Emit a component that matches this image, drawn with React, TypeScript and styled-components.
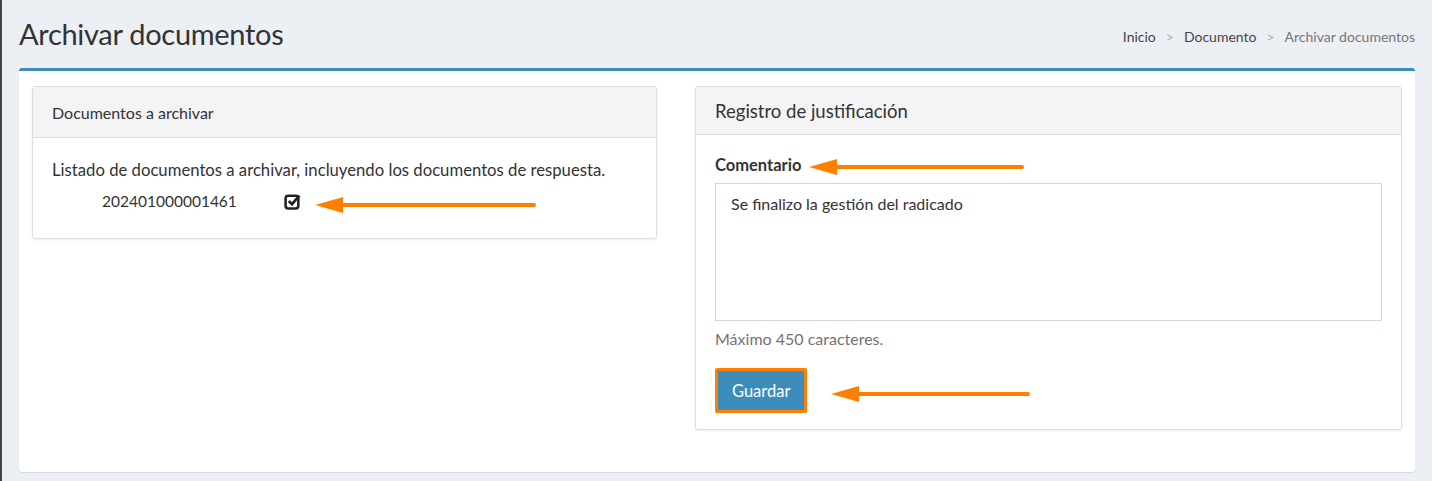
import React from "react";
import styled, { createGlobalStyle } from "styled-components";

const G = createGlobalStyle`
  body { margin:0; background:#ecf0f5; font-family: Lato, "Open Sans", sans-serif; color:#333; }
`;
const Page = styled.div`height:481px; border-left:2px solid #444; box-sizing:border-box; padding:0 17px 0 17px; position:relative;`;
const Head = styled.div`display:flex; justify-content:space-between; align-items:center; height:68px;`;
const Title = styled.h1`margin:0; font-weight:400; font-size:29px; color:#333; letter-spacing:-0.3px; padding-bottom:2px;`;
const Crumbs = styled.div`font-size:14px; color:#444; display:flex; gap:10px; margin-top:4px;`;
const Sep = styled.span`color:#aaa;`;
const Box = styled.div`background:#fff; border-top:3px solid #3c8dbc; border-radius:3px; height:404px; box-sizing:border-box; padding:15px 13px; display:grid; grid-template-columns:625px 707px; gap:38px; align-items:start; box-shadow:0 1px 1px rgba(0,0,0,.1);`;
const Panel = styled.div`border:1px solid #ddd; border-radius:3px; box-shadow:0 1px 2px rgba(0,0,0,.08); position:relative;`;
const PHead = styled.div<{h:number; fs:number}>`height:${p=>p.h}px; background:#f4f4f4; border-bottom:1px solid #ddd; display:flex; align-items:center; padding:0 19px; font-size:${p=>p.fs}px;`;
const PBody = styled.div<{pt:number; pb:number}>`padding:${p=>p.pt}px 19px ${p=>p.pb}px; font-size:16.7px;`;
const Row = styled.div`display:flex; align-items:center; margin-top:10px; padding-left:50px; height:22px;`;
const Num = styled.span`width:182px; font-size:15.5px;`;
const Label = styled.div`font-weight:700; font-size:16.5px;`;
const Area = styled.div`margin-top:8px; height:138px; box-sizing:border-box; border:1px solid #d2d6de; padding:10px 15px; font-size:16px;`;
const Help = styled.div`color:#737373; margin-top:8px; font-size:16px;`;
const Btn = styled.button`display:block; margin-top:20px; background:#3c8dbc; color:#fff; border:3px solid #ff8000; border-radius:2px; font-family:inherit; font-size:16.5px; height:45px; padding:0 14px;`;
const Arrow = styled.svg`position:absolute;`;

const Arr = ({x,y,w}:{x:number,y:number,w:number}) => (
  <Arrow style={{left:x,top:y-10}} width={w} height={20}>
    <line x1={22} y1={10} x2={w-3} y2={10} stroke="#ff8000" strokeWidth={4} strokeLinecap="round"/>
    <polygon points={`0,10 28,2 28,18`} fill="#ff8000"/>
  </Arrow>
);

export default function App(){
  return <Page><G/>
    <Head><Title>Archivar documentos</Title>
      <Crumbs><span>Inicio</span><Sep>&gt;</Sep><span>Documento</span><Sep>&gt;</Sep><span style={{color:"#777"}}>Archivar documentos</span></Crumbs>
    </Head>
    <Box>
      <Panel>
        <PHead h={50} fs={16}>Documentos a archivar</PHead>
        <PBody pt={22} pb={26}>Listado de documentos a archivar, incluyendo los documentos de respuesta.
          <Row><Num>202401000001461</Num>
            <svg width="17" height="17" viewBox="0 0 16 16"><rect x="1.5" y="2.5" width="12" height="12" rx="2.5" fill="none" stroke="#222" strokeWidth="2.4"/><path d="M4.5 7.5 L7.5 10.5 L14.5 2.5" fill="none" stroke="#222" strokeWidth="2.6"/></svg>
          </Row>
        </PBody>
        <Arr x={282} y={118} w={222}/>
      </Panel>
      <Panel>
        <PHead h={47} fs={18.5}>Registro de justificación</PHead>
        <PBody pt={20} pb={16}>
          <Label>Comentario</Label>
          <Area>Se finalizo la gestión del radicado</Area>
          <Help>Máximo 450 caracteres.</Help>
          <Btn>Guardar</Btn>
        </PBody>
        <Arr x={113} y={80} w={216}/>
        <Arr x={135} y={307} w={200}/>
      </Panel>
    </Box>
  </Page>;
}
